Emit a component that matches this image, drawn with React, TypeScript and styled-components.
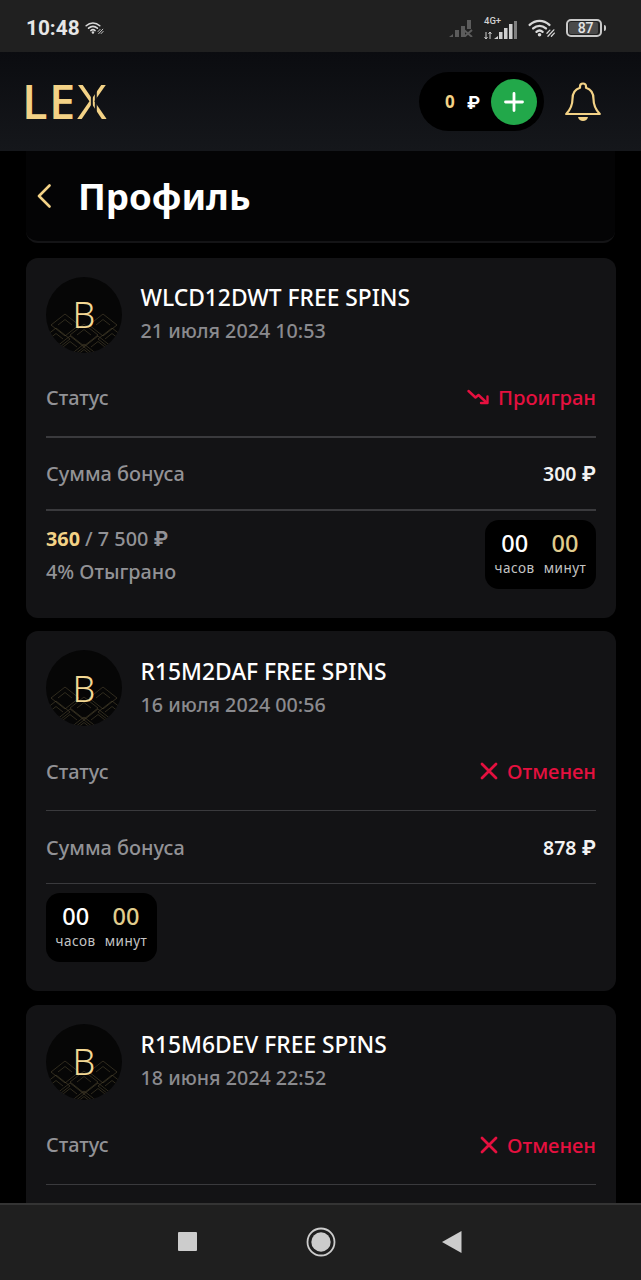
import styled, { createGlobalStyle } from "styled-components";

const GlobalStyle = createGlobalStyle`
  html, body {
    margin: 0;
    padding: 0;
    background: #000;
    font-family: "Noto Sans", "Open Sans", sans-serif;
  }
`;

const Screen = styled.div`
  width: 641px;
  height: 1280px;
  display: flex;
  flex-direction: column;
  overflow: hidden;
  background: #000;
`;

const StatusBar = styled.div`
  flex: 0 0 52px;
  box-sizing: border-box;
  display: flex;
  align-items: center;
  padding: 4px 39px 0 26px;
  background: #202020;
`;

const Clock = styled.span`
  font-family: Roboto, sans-serif;
  font-weight: 700;
  font-size: 20.8px;
  color: #e6e6e6;
  margin-right: 5px;
`;

const StatusRight = styled.div`
  margin-left: auto;
  display: flex;
  align-items: center;
  gap: 9px;
`;

const SignalWrap = styled.div`
  position: relative;
  width: 36px;
  height: 22px;
`;

const NetLabel = styled.span`
  position: absolute;
  left: 1px;
  top: -2px;
  font-family: Roboto, sans-serif;
  font-weight: 500;
  font-size: 9.500px;
  color: #d0d0d0;
`;

const Battery = styled.div`
  position: relative;
  box-sizing: border-box;
  width: 36px;
  height: 18px;
  border: 2px solid #c9c9c9;
  border-radius: 5px;
  padding: 1px;
  display: flex;
  &::after {
    content: "";
    position: absolute;
    right: -6px;
    top: 4px;
    width: 2px;
    height: 6px;
    background: #c9c9c9;
    border-radius: 0 2px 2px 0;
  }
`;

const BatteryLevel = styled.div`
  width: 84%;
  background: #4a4a4a;
  border-radius: 2px;
  display: flex;
  align-items: center;
  justify-content: center;
  font-family: Roboto, sans-serif;
  font-size: 14px;
  font-weight: 500;
  color: #e4e4e4;
  padding-left: 4px;
`;

const Header = styled.header`
  flex: 0 0 99px;
  box-sizing: border-box;
  display: flex;
  align-items: center;
  justify-content: space-between;
  padding: 0 40px 0 22px;
  background: linear-gradient(180deg, #0b0c10 0%, #15171b 100%);
`;

const Logo = styled.div`
  display: flex;
  align-items: center;
  font-family: "Open Sans", sans-serif;
  font-size: 47px;
  line-height: 1;
  font-weight: 600;
  color: #f3d286;
  letter-spacing: 1.500px;
`;

const LogoX = styled.span`
  display: inline-block;
  margin-left: 0;
  font-weight: 500;
  letter-spacing: 0;
  transform: scaleX(1.1);
  transform-origin: left center;
  background: linear-gradient(90deg, #f3d286 0 48%, #15171b 48% 53%, #f3d286 53% 60%, #15171b 60% 66%, #f3d286 66% 100%);
  -webkit-background-clip: text;
  background-clip: text;
  color: transparent;
`;

const HeaderRight = styled.div`
  display: flex;
  align-items: center;
  gap: 21px;
`;

const BalancePill = styled.div`
  box-sizing: border-box;
  width: 125px;
  height: 59px;
  display: flex;
  align-items: center;
  padding: 0 7px 0 26px;
  background: #000;
  border-radius: 30px;
`;

const BalanceValue = styled.span`
  font-size: 17px;
  font-weight: 700;
  color: #f3d286;
  margin-right: 12px;
`;

const BalanceCurrency = styled.span`
  font-size: 18px;
  color: #fff;
`;

const AddButton = styled.div`
  margin-left: auto;
  width: 46px;
  height: 46px;
  border-radius: 50%;
  background: #22a84a;
  display: flex;
  align-items: center;
  justify-content: center;
`;

const TitleBar = styled.div`
  flex: 0 0 92px;
  box-sizing: border-box;
  padding: 0 26px;
  background: #000;
`;

const TitleInner = styled.div`
  box-sizing: border-box;
  height: 92px;
  display: flex;
  align-items: center;
  gap: 27px;
  padding: 0 0 0 11px;
  background: #040405;
  border-bottom: 2px solid #141416;
  border-radius: 0 0 12px 12px;
`;

const Title = styled.h1`
  margin: 0;
  font-size: 36.600px;
  font-weight: 700;
  color: #fff;
  line-height: 1;
`;

const Content = styled.main`
  flex: 1;
  min-height: 0;
  overflow: hidden;
  display: flex;
  flex-direction: column;
  gap: 13.500px;
  padding: 14.700px 25px 0 26px;
`;

const Card = styled.section`
  flex: 0 0 360px;
  box-sizing: border-box;
  padding: 19px 20px 0;
  background: #131315;
  border-radius: 12px;
`;

const CardHead = styled.div`
  display: flex;
  align-items: center;
  gap: 18.500px;
  height: 76px;
  margin-bottom: 6px;
`;

const Avatar = styled.div`
  position: relative;
  flex: 0 0 76px;
  width: 76px;
  height: 76px;
  border-radius: 50%;
  overflow: hidden;
  background: #060606;
  display: flex;
  align-items: center;
  justify-content: center;
  font-size: 36px;
  font-weight: 300;
  color: #f3d894;
  svg {
    position: absolute;
    inset: 0;
  }
  span {
    position: relative;
  }
`;

const HeadText = styled.div`
  display: flex;
  flex-direction: column;
  gap: 6px;
  margin-top: -2px;
`;

const CardTitle = styled.div`
  font-size: 22.800px;
  font-weight: 500;
  line-height: 29px;
  color: #fff;
`;

const CardDate = styled.div`
  font-size: 19.700px;
  font-weight: 500;
  line-height: 26px;
  color: #8a8a8e;
`;

const Row = styled.div<{ $height: number; $thick: boolean }>`
  box-sizing: border-box;
  height: ${({ $height }) => $height}px;
  display: flex;
  align-items: center;
  justify-content: space-between;
  border-bottom: ${({ $thick }) => ($thick ? 2 : 1)}px solid #3a3a3d;
`;

const Label = styled.span`
  font-size: 19.900px;
  font-weight: 500;
  color: #929296;
`;

const StatusValue = styled.span`
  display: flex;
  align-items: center;
  gap: 9px;
  font-size: 20.200px;
  font-weight: 500;
  color: #e5103f;
`;

const Amount = styled.span`
  font-size: 19.500px;
  font-weight: 600;
  color: #f2f2f2;
`;

const Ruble = styled.span`
  font-family: Inter, "Noto Sans", sans-serif;
  font-weight: 700;
`;

const Footer = styled.div`
  display: flex;
  align-items: flex-start;
  justify-content: space-between;
  padding-top: 9px;
`;

const Wager = styled.div`
  display: flex;
  flex-direction: column;
  gap: 5px;
  padding-top: 5px;
  font-size: 19.800px;
  font-weight: 500;
  line-height: 27px;
  color: #929296;
`;

const WagerDone = styled.b`
  font-weight: 700;
  color: #f3d286;
`;

const Timer = styled.div`
  box-sizing: border-box;
  width: 111px;
  height: 69px;
  padding-top: 8px;
  display: flex;
  justify-content: center;
  gap: 9px;
  background: #000;
  border-radius: 14px;
`;

const TimerCell = styled.div`
  display: flex;
  flex-direction: column;
  align-items: center;
`;

const TimerValue = styled.span<{ $gold?: boolean }>`
  font-size: 23.500px;
  font-weight: 500;
  line-height: 30px;
  color: ${({ $gold }) => ($gold ? "#e0cd8d" : "#fff")};
`;

const TimerLabel = styled.span`
  font-size: 13.500px;
  line-height: 20px;
  letter-spacing: 0.500px;
  color: #c4c4c4;
`;

const NavBar = styled.nav`
  flex: 0 0 77px;
  box-sizing: border-box;
  display: flex;
  align-items: center;
  gap: 107px;
  padding: 0 0 2px 178px;
  background: #1f1f1f;
  border-top: 2px solid #343434;
`;

const HomeButton = styled.div`
  display: flex;
  margin: 0 -1px 0 2px;
`;

type BonusCard = {
  code: string;
  date: string;
  lost: boolean;
  amount?: string;
  wager?: { done: string; total: string; percent: string };
  thick: boolean;
};

// the third card runs under the nav bar, only its top part is on screen
const cards: BonusCard[] = [
  {
    code: "WLCD12DWT FREE SPINS",
    date: "21 июля 2024 10:53",
    lost: true,
    amount: "300",
    wager: { done: "360", total: " / 7 500 ", percent: "4% Отыграно" },
    thick: true,
  },
  { code: "R15M2DAF FREE SPINS", date: "16 июля 2024 00:56", lost: false, amount: "878", thick: false },
  { code: "R15M6DEV FREE SPINS", date: "18 июня 2024 22:52", lost: false, thick: false },
];

function WifiIcon({ width }: { width: number }) {
  return (
    <svg width={width} height={width * 0.68} viewBox="0 0 29 20" fill="none" stroke="#d8d8d8" strokeWidth="2.400" strokeLinecap="round">
      <path d="M1.500 7C7.500 1.600 15.500 1.600 21.500 7" />
      <path d="M5 10.600C9 7.200 14 7.200 18 10.600" />
      <path d="M8.400 14C10.400 12.400 12.600 12.400 14.600 14" />
      <circle cx="11.500" cy="17" r="1.800" fill="#d8d8d8" stroke="none" />
      <path d="M20 18.500l6-6.500M19 15.500l3-3.200M23.500 18.500l3-3.200" strokeWidth="1.300" />
    </svg>
  );
}

function SignalBars() {
  return (
    <svg width="25" height="18" viewBox="0 0 25 18" fill="#5c5c5c">
      <polygon points="0,18 4,15 4,18" />
      <rect x="6" y="11" width="4" height="7" />
      <rect x="12" y="7" width="4" height="11" />
      <rect x="18" y="1" width="4" height="9" />
      <path d="M15 11l8 7M23 11l-8 7" stroke="#5c5c5c" strokeWidth="2" />
    </svg>
  );
}

function PlusIcon() {
  return (
    <svg width="24" height="24" viewBox="0 0 24 24" stroke="#fff" strokeWidth="2.800" strokeLinecap="round">
      <path d="M12 3.500v17M3.500 12h17" />
    </svg>
  );
}

function BellIcon() {
  return (
    <svg width="36" height="40" viewBox="0 0 36 40" fill="none" stroke="#f3d286" strokeWidth="2.200" strokeLinejoin="round">
      <path d="M18 1.500c-1.800 0-3 1.200-3 3v1.300C10 7.300 7.500 11.500 7.500 17c0 7-2 10.500-6.300 15h33.600c-4.300-4.500-6.300-8-6.300-15 0-5.500-2.500-9.700-7.500-11.200V4.500c0-1.800-1.200-3-3-3z" />
      <path d="M13 35h10c-.5 2.500-2.500 4-5 4s-4.500-1.500-5-4z" fill="#f3d286" stroke="none" />
    </svg>
  );
}

function BackIcon() {
  return (
    <svg width="14" height="24" viewBox="0 0 14 24" fill="none" stroke="#f3d286" strokeWidth="2.600" strokeLinecap="round" strokeLinejoin="round">
      <path d="M12.500 1.500L2 12l10.500 10.500" />
    </svg>
  );
}

function LostIcon() {
  return (
    <svg width="22" height="16" viewBox="0 0 22 16" fill="none" stroke="#e5103f" strokeWidth="2.400" strokeLinecap="round" strokeLinejoin="round">
      <path d="M1.500 2l7 6.500 3-2.500 8 7.500" />
      <path d="M20.500 7.500v6.500h-6.500" />
    </svg>
  );
}

function CancelIcon() {
  return (
    <svg width="18" height="18" viewBox="0 0 18 18" stroke="#e5103f" strokeWidth="2.800" strokeLinecap="round">
      <path d="M2 2l14 14M16 2L2 16" />
    </svg>
  );
}

// parquet pattern on the lower half of the avatar
function AvatarPattern() {
  const cells = [
    [19, 48], [57, 48], [38, 58], [10, 62], [66, 62], [24, 70], [52, 70], [38, 78],
  ];
  return (
    <svg width="76" height="76" viewBox="0 0 76 76" fill="none" stroke="#8a7a52" strokeWidth="0.600" opacity="0.55">
      {cells.map(([x, y]) => (
        <g key={`${x}-${y}`}>
          <path d={`M${x - 14} ${y}L${x} ${y - 11}L${x + 14} ${y}L${x} ${y + 11}Z`} />
          <path d={`M${x - 7} ${y}L${x} ${y - 5.500}L${x + 7} ${y}`} />
        </g>
      ))}
    </svg>
  );
}

function CountDown() {
  return (
    <Timer>
      <TimerCell>
        <TimerValue>00</TimerValue>
        <TimerLabel>часов</TimerLabel>
      </TimerCell>
      <TimerCell>
        <TimerValue $gold>00</TimerValue>
        <TimerLabel>минут</TimerLabel>
      </TimerCell>
    </Timer>
  );
}

export default function App() {
  return (
    <Screen>
      <GlobalStyle />
      <StatusBar>
        <Clock>10:48</Clock>
        <WifiIcon width={20} />
        <StatusRight>
          <SignalBars />
          <SignalWrap>
            <NetLabel>4G+</NetLabel>
            <svg width="36" height="22" viewBox="0 0 36 22" fill="#cfcfcf">
              <path d="M3 15v7M1.500 20l1.500 2 1.500-2M7 22v-7M5.500 17l1.500-2 1.500 2" stroke="#cfcfcf" strokeWidth="1" fill="none" />
              <polygon points="11,22 15,19 15,22" />
              <rect x="16" y="15" width="3.500" height="7" />
              <rect x="21" y="11" width="3.500" height="11" />
              <rect x="26" y="7" width="3.500" height="15" />
              <rect x="31" y="4" width="3" height="18" opacity="0.55" />
            </svg>
          </SignalWrap>
          <WifiIcon width={29} />
          <Battery>
            <BatteryLevel>87</BatteryLevel>
          </Battery>
        </StatusRight>
      </StatusBar>

      <Header>
        <Logo>
          LE<LogoX>X</LogoX>
        </Logo>
        <HeaderRight>
          <BalancePill>
            <BalanceValue>0</BalanceValue>
            <BalanceCurrency>
              <Ruble>₽</Ruble>
            </BalanceCurrency>
            <AddButton>
              <PlusIcon />
            </AddButton>
          </BalancePill>
          <BellIcon />
        </HeaderRight>
      </Header>

      <TitleBar>
        <TitleInner>
          <BackIcon />
          <Title>Профиль</Title>
        </TitleInner>
      </TitleBar>

      <Content>
        {cards.map((card) => (
          <Card key={card.code}>
            <CardHead>
              <Avatar>
                <AvatarPattern />
                <span>B</span>
              </Avatar>
              <HeadText>
                <CardTitle>{card.code}</CardTitle>
                <CardDate>{card.date}</CardDate>
              </HeadText>
            </CardHead>
            <Row $height={79} $thick={card.thick}>
              <Label>Статус</Label>
              {card.lost ? (
                <StatusValue>
                  <LostIcon />
                  Проигран
                </StatusValue>
              ) : (
                <StatusValue>
                  <CancelIcon />
                  Отменен
                </StatusValue>
              )}
            </Row>
            {card.amount && (
              <>
                <Row $height={73} $thick={card.thick}>
                  <Label>Сумма бонуса</Label>
                  <Amount>
                    {card.amount} <Ruble>₽</Ruble>
                  </Amount>
                </Row>
                <Footer>
                  {card.wager && (
                    <Wager>
                      <span>
                        <WagerDone>{card.wager.done}</WagerDone>
                        {card.wager.total}
                        <Ruble>₽</Ruble>
                      </span>
                      <span>{card.wager.percent}</span>
                    </Wager>
                  )}
                  <CountDown />
                </Footer>
              </>
            )}
          </Card>
        ))}
      </Content>

      <NavBar>
        <svg width="19" height="19" viewBox="0 0 19 19">
          <rect width="19" height="19" rx="1" fill="#cccccc" />
        </svg>
        <HomeButton>
          <svg width="30" height="30" viewBox="0 0 30 30" fill="none">
            <circle cx="15" cy="15" r="13.500" stroke="#cccccc" strokeWidth="1.800" />
            <circle cx="15" cy="15" r="9.700" fill="#cccccc" />
          </svg>
        </HomeButton>
        <svg width="20" height="22" viewBox="0 0 20 22">
          <polygon points="0,11 19.500,0 19.500,22" fill="#cccccc" />
        </svg>
      </NavBar>
    </Screen>
  );
}
